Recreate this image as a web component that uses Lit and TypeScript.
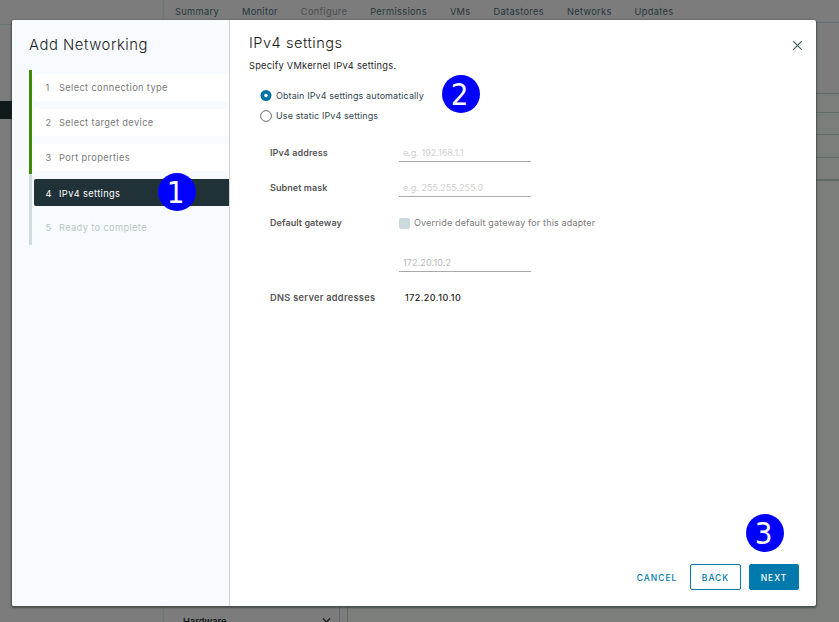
import { LitElement, html, css } from "lit";
import { customElement } from "lit/decorators.js";
import { classMap } from "lit/directives/class-map.js";

const tabs = ["Summary", "Monitor", "Configure", "Permissions", "VMs", "Datastores", "Networks", "Updates"];
const steps = [
  { label: "Select connection type", state: "done" },
  { label: "Select target device", state: "done" },
  { label: "Port properties", state: "done" },
  { label: "IPv4 settings", state: "current" },
  { label: "Ready to complete", state: "todo" },
];

@customElement("callout-badge")
class CalloutBadge extends LitElement {
  static styles = css`
    :host {
      box-sizing: border-box;
      width: 38px;
      height: 38px;
      padding-right: 3px;
      border-radius: 50%;
      background: #0000ff;
      color: #fff;
      display: flex;
      align-items: center;
      justify-content: center;
      font: 31px/38px "DejaVu Sans Condensed", "DejaVu Sans", sans-serif;
      font-stretch: condensed;
      letter-spacing: 0;
    }
  `;
  render() {
    return html`<slot></slot>`;
  }
}

@customElement("host-page")
class HostPage extends LitElement {
  static styles = css`
    :host {
      display: grid;
      grid-template-columns: 164px 1fr;
      height: 622px;
      background: #7c7c7c;
      color: #26373d;
      overflow: hidden;
    }
    .tree { border-right: 1px solid #6c7878; }
    .tree-head { height: 24px; border-bottom: 1px solid #657477; }
    .selected { margin-top: 76px; height: 18px; background: #10191c; }
    .main { display: flex; flex-direction: column; }
    nav {
      display: flex;
      gap: 23px;
      height: 22px;
      padding-left: 11px;
      border-bottom: 1px solid #657477;
      line-height: 24px;
      font-size: 9.25px;
      letter-spacing: 0.33px;
      white-space: nowrap;
    }
    .active { color: #4b4f50; }
    .content { flex: 1; display: grid; grid-template-columns: 176px 6px 1fr; }
    .menu { border-right: 1px solid #626968; display: flex; align-items: flex-end; }
    .group {
      flex: 1;
      height: 7px;
      padding: 0 8px 0 19px;
      display: flex;
      justify-content: space-between;
      color: #141b1e;
      font-size: 9.25px;
      font-weight: 600;
      line-height: 14px;
    }
    .group svg { margin-top: 3px; }
    .panel { margin: 70px 0 0 1px; border-left: 1px solid #606a67; border-top: 1px solid #606a67; background: #7a7f7b; }
    .line { height: 18px; border-bottom: 1px solid #606a67; }
    .l2 { height: 21px; }
    .l3 { height: 22px; }
    .l4 { height: 21px; border-bottom-width: 2px; }
  `;
  render() {
    return html`
      <div class="tree"><div class="tree-head"></div><div class="selected"></div></div>
      <div class="main">
        <nav>${tabs.map((t) => html`<span class=${classMap({ active: t === "Configure" })}>${t}</span>`)}</nav>
        <div class="content">
          <div class="menu">
            <div class="group">
              <span>Hardware</span>
              <svg width="9" height="6" viewBox="0 0 9 6" fill="none" stroke="#141b1e" stroke-width="1.2"><path d="M1 .5 4.5 4 8 .5" /></svg>
            </div>
          </div>
          <div></div>
          <div class="panel">
            <div class="line"></div><div class="line l2"></div><div class="line l3"></div><div class="line l4"></div>
          </div>
        </div>
      </div>
    `;
  }
}

@customElement("app-root")
class AppRoot extends LitElement {
  static styles = css`
    * { box-sizing: border-box; }
    :host {
      display: block;
      position: relative;
      width: 839px;
      height: 622px;
      overflow: hidden;
      font-family: Inter, "Open Sans", sans-serif;
      font-size: 9px;
    }
    .modal {
      position: absolute;
      left: 12px;
      top: 20px;
      width: 804px;
      height: 586px;
      display: flex;
      background: #fff;
      border-radius: 2px;
      box-shadow: 0 1px 2px 1px rgba(30, 40, 38, 0.55);
      white-space: nowrap;
    }
    .side {
      width: 218px;
      background: #f7faff;
      border-right: 1px solid #cbd8db;
      border-radius: 2px 0 0 2px;
      padding-left: 17px;
    }
    h1, h2 { margin: 0; font-weight: 400; color: #1a1a1a; }
    h1 { height: 50px; padding-top: 13px; font-size: 14.8px; line-height: 25px; font-weight: 300; letter-spacing: 0.55px; }
    h2 { font-size: 14.6px; line-height: 23px; font-weight: 300; letter-spacing: 0.5px; }
    ol { list-style: none; margin: 0; padding: 0; }
    .step { height: 35px; padding: 4px 0 4px 2px; border-left: 3px solid #3f8b04; }
    .step.s3 { height: 34px; }
    .step.current { height: 37px; padding-top: 5px; padding-bottom: 5px; border-color: #cfdcdf; }
    .step.todo { height: 34px; padding-top: 3px; border-color: #cfdcdf; }
    .label {
      height: 27px;
      display: flex;
      align-items: center;
      background: #fff;
      border-radius: 2px 0 0 2px;
      color: #797979;
      font-size: 9.25px;
      letter-spacing: 0.37px;
    }
    .current .label { background: #213138; color: #fff; padding-top: 1px; }
    .todo .label { background: none; color: #b8c6c6; }
    .num { width: 25px; padding-left: 11.5px; }
    .body { flex: 1; display: flex; flex-direction: column; padding: 12px 17px 16px 19px; }
    .head { display: flex; justify-content: space-between; align-items: flex-start; height: 27px; }
    .close { margin: 9px -3px 0 0; }
    .intro { line-height: 14px; height: 14px; color: #252525; font-size: 9.25px; letter-spacing: 0.26px; }
    .radios { padding: 13px 0 0 11px; color: #33484f; letter-spacing: 0.1px; }
    .radio { display: flex; align-items: center; gap: 4px; height: 20px; line-height: 12px; }
    .radio span { padding-bottom: 1px; }
    .form {
      display: grid;
      grid-template-columns: 129px 1fr;
      grid-template-rows: 35px 35px 40px 35px 34px;
      margin: 14px 0 0 21px;
      line-height: 14px;
    }
    .form > * { padding-top: 6px; }
    .name { color: #565656; font-weight: 600; letter-spacing: 0.08px; }
    .wide { font-size: 9.25px; letter-spacing: 0.28px; }
    .field { width: 132px; height: 16px; padding-left: 4px; border-bottom: 1px solid #a9a9a9; color: #d0d0d0; }
    .value { color: #b8b8b8; letter-spacing: 0.13px; }
    .check { display: flex; align-items: flex-start; gap: 4px; height: 15px; color: #797979; letter-spacing: 0.16px; }
    .box { width: 11px; height: 11px; margin-top: 2px; border-radius: 2px; background: #cbd8dc; }
    .dns { color: #1f1f1f; font-weight: 500; padding-left: 6px; letter-spacing: 0.43px; }
    .foot { margin-top: auto; display: flex; justify-content: flex-end; gap: 8px; }
    button {
      height: 26px;
      padding: 2px 0 0;
      border: 1px solid #0079ad;
      border-radius: 2px;
      background: #fff;
      color: #0079ad;
      font: 500 8.5px Inter, sans-serif;
      letter-spacing: 1px;
      width: 51px;
    }
    .cancel { border-color: transparent; width: 50px; }
    .next { background: #0079ad; color: #fff; width: 50px; }
    .badge { position: absolute; }
    .b1 { left: 158px; top: 173px; }
    .b2 { left: 442px; top: 75px; }
    .b3 { left: 746px; top: 514px; }
  `;
  render() {
    return html`
      <host-page></host-page>
      <div class="modal">
        <div class="side">
          <h1>Add Networking</h1>
          <ol>
            ${steps.map(
              (s, i) => html`<li class="step s${i + 1} ${s.state}">
                <div class="label"><span class="num">${i + 1}</span><span>${s.label}</span></div>
              </li>`
            )}
          </ol>
        </div>
        <div class="body">
          <div class="head">
            <h2>IPv4 settings</h2>
            <svg class="close" width="9" height="9" viewBox="0 0 9 9" stroke="#3d5560" stroke-width="1.1"><path d="M.3.3 8.7 8.7M8.7.3.3 8.7" /></svg>
          </div>
          <div class="intro">Specify VMkernel IPv4 settings.</div>
          <div class="radios">
            <div class="radio">
              <svg width="12" height="12"><circle cx="6" cy="5.5" r="5.5" fill="#0072a3" /><circle cx="6" cy="5.5" r="1.8" fill="#fff" /></svg>
              <span>Obtain IPv4 settings automatically</span>
            </div>
            <div class="radio">
              <svg width="12" height="12"><circle cx="6" cy="6" r="5.4" fill="#fff" stroke="#6a6a6a" /></svg>
              <span>Use static IPv4 settings</span>
            </div>
          </div>
          <div class="form">
            <div class="name">IPv4 address</div>
            <div><div class="field">e.g. 192.168.1.1</div></div>
            <div class="name">Subnet mask</div>
            <div><div class="field">e.g. 255.255.255.0</div></div>
            <div class="name">Default gateway</div>
            <div><div class="check"><span class="box"></span><span>Override default gateway for this adapter</span></div></div>
            <div></div>
            <div><div class="field value">172.20.10.2</div></div>
            <div class="name wide">DNS server addresses</div>
            <div class="dns">172.20.10.10</div>
          </div>
          <div class="foot">
            <button class="cancel">CANCEL</button>
            <button>BACK</button>
            <button class="next">NEXT</button>
          </div>
        </div>
      </div>
      <callout-badge class="badge b1">1</callout-badge>
      <callout-badge class="badge b2">2</callout-badge>
      <callout-badge class="badge b3">3</callout-badge>
    `;
  }
}
